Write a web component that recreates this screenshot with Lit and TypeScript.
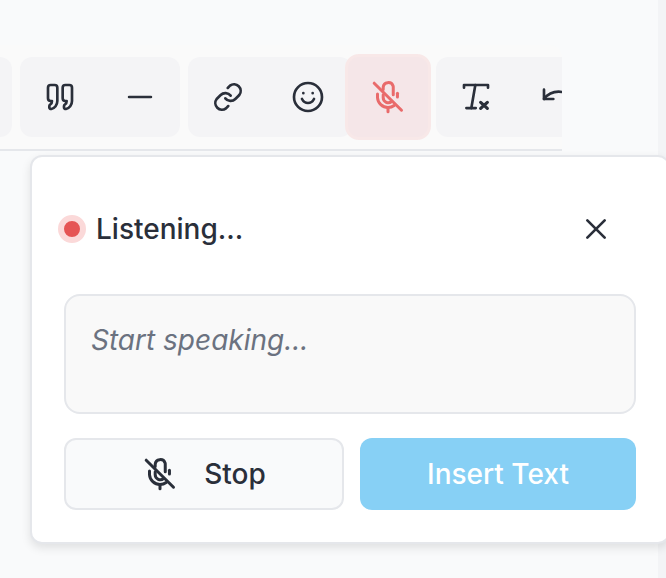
import { LitElement, html, css, svg } from "lit";
import { customElement } from "lit/decorators.js";

const micOff = svg`
  <path d="M8.800 7V5.500a3.400 3.400 0 0 1 6.600-.8c.1.300.1.500.1.800v5"/>
  <path d="M8.800 10.500v2a3.400 3.400 0 0 0 5.600 2.500"/>
  <path d="M5 10v2.500a7 7 0 0 0 7 6.500c1.500 0 2.900-.4 4.100-1.300"/>
  <path d="M18.300 9.500V12"/>
  <path d="M12 19v2.800"/>
  <path d="M2.800 2.800 21 20.800"/>
`;

const quoteMark = "M3 5a2 2 0 0 1 2-2h3a2 2 0 0 1 2 2v10c0 3-2 5.500-4.500 6-.8.100-1.500-.4-1.500-1.200v-1c0-.6.300-1 .8-1.300.7-.4 1.200-1.500 1.200-2.500H5a2 2 0 0 1-2-2z";

@customElement("app-root")
export class AppRoot extends LitElement {
  static styles = css`
    :host {
      display: block;
      position: relative;
      width: 666px;
      height: 578px;
      overflow: hidden;
      background: #f9fafb;
      font-family: Inter, "Liberation Sans", sans-serif;
      color: #2a2f3a;
    }

    * {
      box-sizing: border-box;
    }

    svg {
      display: block;
      fill: none;
      stroke: currentColor;
      stroke-width: 2;
      stroke-linecap: round;
      stroke-linejoin: round;
    }

    .scrollbar {
      position: absolute;
      top: 0;
      right: 0;
      bottom: 0;
      width: 8px;
      background: #f3f4f6;
    }

    .toolbar {
      display: flex;
      align-items: center;
      gap: 8px;
      width: 562px;
      height: 106px;
      margin-top: 45px;
      overflow: hidden;
      background: #fafafa;
      border-bottom: 2px solid #e5e7eb;
      border-top-right-radius: 12px;
    }

    .group {
      flex: none;
      display: flex;
      align-items: center;
      height: 80px;
      background: #f4f4f6;
      border-radius: 12px;
    }

    .group.first {
      width: 80px;
      margin-left: -68px;
    }

    .group.wide {
      width: 160px;
    }

    .group.third {
      width: 164px;
      margin-right: -15px;
    }

    .group.last {
      width: 160px;
      margin-left: -3px;
    }

    .tool {
      flex: none;
      display: grid;
      place-items: center;
      width: 80px;
      height: 80px;
    }

    .mic {
      flex: none;
      display: grid;
      place-items: center;
      width: 86px;
      height: 86px;
      border: 3px solid #f8e8e8;
      border-radius: 14px;
      background: #f5e6e8;
      color: #e96b6b;
      position: relative;
    }

    .panel {
      position: absolute;
      left: 30px;
      top: 155px;
      width: 640px;
      height: 389px;
      padding: 0 32px;
      background: #fff;
      border: 2px solid #e5e7eb;
      border-radius: 12px;
      box-shadow: 0 4px 10px rgba(0, 0, 0, 0.1);
    }

    .header {
      display: flex;
      align-items: center;
      justify-content: space-between;
      height: 38px;
      margin-top: 53px;
      margin-left: -6px;
      padding-right: 24px;
    }

    .status {
      display: flex;
      align-items: center;
      gap: 10px;
      font-size: 28px;
      font-weight: 450;
      line-height: 38px;
    }

    .dot {
      width: 28px;
      height: 28px;
      border-radius: 50%;
      background: #e55454;
      border: 6px solid #fbd9d9;
    }

    .transcript {
      height: 120px;
      margin-top: 46px;
      padding: 25px 25px;
      background: #f9f9f9;
      border: 2px solid #e5e7eb;
      border-radius: 16px;
      font-size: 28px;
      line-height: 38px;
      font-style: italic;
      color: #6b7280;
    }

    .actions {
      display: flex;
      gap: 16px;
      margin-top: 24px;
    }

    .btn {
      flex: none;
      display: flex;
      align-items: center;
      justify-content: center;
      height: 72px;
      width: 280px;
      border-radius: 12px;
      font-size: 28px;
    }

    .stop {
      gap: 26px;
      background: #f9fafb;
      border: 2px solid #e5e7eb;
      font-weight: 450;
    }

    .insert {
      width: 276px;
      background: #87d0f5;
      color: #fff;
      font-weight: 550;
    }
  `;

  render() {
    return html`
      <div class="scrollbar"></div>
      <div class="toolbar">
        <div class="group first"></div>
        <div class="group wide">
          <div class="tool">
            <svg width="32" height="32" viewBox="0 0 24 24">
              <path d=${quoteMark}/>
              <path d=${quoteMark} transform="translate(11 0)"/>
            </svg>
          </div>
          <div class="tool">
            <svg width="32" height="32" viewBox="0 0 24 24"><path d="M3.800 12h16.400"/></svg>
          </div>
        </div>
        <div class="group third">
          <div class="tool">
            <svg width="32" height="32" viewBox="0 0 24 24">
              <path d="M10 13a5 5 0 0 0 7.500.5l3-3a5 5 0 0 0-7-7l-1.700 1.700"/>
              <path d="M14 11a5 5 0 0 0-7.500-.5l-3 3a5 5 0 0 0 7 7l1.700-1.700"/>
            </svg>
          </div>
          <div class="tool">
            <svg width="32" height="32" viewBox="0 0 24 24">
              <circle cx="12" cy="12" r="10.500"/>
              <path d="M7.500 13.500c1 2 2.600 3 4.500 3s3.500-1 4.500-3"/>
              <path d="M8.500 9v.2M15.500 9v.2"/>
            </svg>
          </div>
        </div>
        <div class="mic">
          <svg width="36" height="36" viewBox="0 0 24 24">${micOff}</svg>
        </div>
        <div class="group last">
          <div class="tool">
            <svg width="32" height="32" viewBox="0 0 24 24">
              <path d="M3 5V3h18v2"/>
              <path d="M11.500 3 8.500 20.300"/>
              <path d="M4.800 20.300h7"/>
              <path d="m15.500 16 5 4.500M20.500 16l-5 4.500" stroke-width="2.400"/>
            </svg>
          </div>
          <div class="tool">
            <svg width="32" height="32" viewBox="0 0 24 24">
              <path d="M3 6.500v7h7"/>
              <path d="M3 13.500C6 9.500 10 8 14 8c3 0 5.500 1 7 3"/>
            </svg>
          </div>
        </div>
      </div>

      <div class="panel">
        <div class="header">
          <div class="status"><span class="dot"></span>Listening...</div>
          <svg width="32" height="32" viewBox="0 0 24 24"><path d="m5.500 5.500 13 13M18.500 5.500l-13 13"/></svg>
        </div>
        <div class="transcript">Start speaking...</div>
        <div class="actions">
          <div class="btn stop">
            <svg width="36" height="36" viewBox="0 0 24 24">${micOff}</svg>
            <span>Stop</span>
          </div>
          <div class="btn insert">Insert Text</div>
        </div>
      </div>
    `;
  }
}
